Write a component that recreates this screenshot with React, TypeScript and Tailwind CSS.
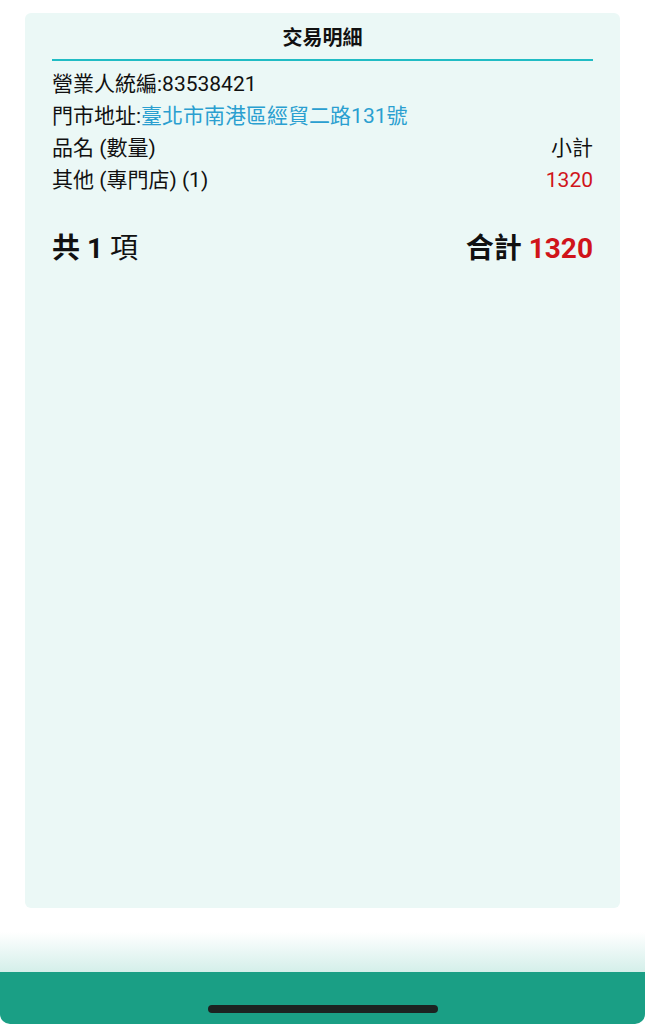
export default function App() {
  const font = { fontFamily: 'Roboto, "Noto Sans CJK TC", "Noto Sans", sans-serif' };
  return (
    <div className="w-[645px] h-[1024px] bg-white flex flex-col overflow-hidden" style={font}>
      {/* Detail card */}
      <div className="mx-[25px] mt-[13px] h-[895px] rounded-md bg-[#ebf8f6] px-[27px] text-[#111] flex flex-col">
        <h2 className="text-center text-[20px] font-bold leading-[20px] pt-[15px] pb-[11px]">
          交易明細
        </h2>
        <div className="h-[1.5px] bg-[#20bcc4]" />
        <div className="text-[21px] leading-[32.3px] mt-[7px]">
          <div>營業人統編:83538421</div>
          <div>
            門市地址:<span className="text-[#2a9fd0]">臺北市南港區經貿二路131號</span>
          </div>
          <div className="flex justify-between">
            <span>品名 (數量)</span>
            <span>小計</span>
          </div>
          <div className="flex justify-between">
            <span>其他 (專門店) (1)</span>
            <span className="text-[#d0141a]">1320</span>
          </div>
        </div>
        <div className="flex justify-between items-center mt-[34px] text-[28px] leading-[36px]">
          <div>
            <span className="font-bold">共 1</span> <span>項</span>
          </div>
          <div className="font-bold">
            合計 <span className="text-[#d0141a]">1320</span>
          </div>
        </div>
      </div>

      {/* Bottom area */}
      <div className="mt-auto h-[40px] bg-gradient-to-b from-white to-[#d4efea]" />
      <div className="h-[52px] bg-[#1a9f85] rounded-b-[10px] flex items-end justify-center pb-[11px]">
        <div className="w-[230px] h-[8px] rounded-full bg-[#1c2321]" />
      </div>
    </div>
  );
}
